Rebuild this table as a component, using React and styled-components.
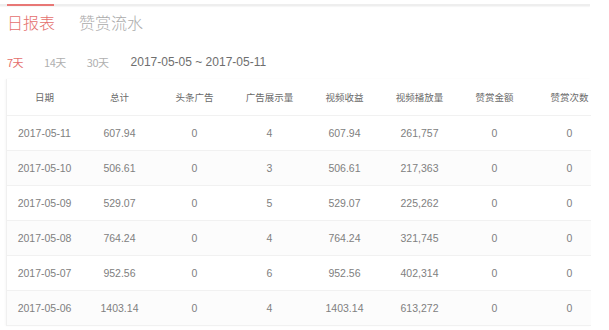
import React from "react";
import styled, { createGlobalStyle } from "styled-components";

const GlobalStyle = createGlobalStyle`
  html, body {
    margin: 0;
    padding: 0;
    background: #fff;
    width: 609px;
    height: 330px;
    overflow: hidden;
  }
  body {
    font-family: "Liberation Sans", "Noto Sans CJK SC", sans-serif;
  }
`;

const Page = styled.div`
  width: 609px;
  height: 330px;
  padding-top: 4px;
  box-sizing: border-box;
`;

const TopRule = styled.div`
  width: 590px;
  height: 2px;
  background: #eeeeee;
  box-shadow: 0 1px 1px rgba(0, 0, 0, 0.04);
  position: relative;
`;

const RuleMark = styled.div`
  position: absolute;
  left: 7px;
  top: 0;
  width: 47px;
  height: 2px;
  background: #e87775;
`;

const Tabs = styled.div`
  display: flex;
  gap: 24px;
  padding: 0 0 7px 7px;
  align-items: center;
  box-sizing: border-box;
  height: 39px;
`;

const Tab = styled.div`
  font-family: "Noto Sans CJK SC", sans-serif;
  font-size: 16px;
  font-weight: 300;
  color: ${(p) => (p.$active ? "#e46f6d" : "#ababab")};
`;

const Filters = styled.div`
  display: flex;
  align-items: center;
  padding: 8px 0 0 7px;
  height: 18px;
  font-size: 11px;
`;

const Range = styled.span`
  font-family: "Noto Sans CJK SC", sans-serif;
  color: ${(p) => (p.$active ? "#e46f6d" : "#b0b0b0")};
  margin-right: ${(p) => p.$gap}px;
  letter-spacing: -0.5px;
`;

const Dates = styled.span`
  font-family: "Liberation Sans", sans-serif;
  font-size: 12px;
  color: #6e6e6e;
  white-space: pre;
`;

const Table = styled.div`
  margin: 8px 0 0 6px;
  width: 584px;
  border-left: 1px solid #f0f0f0;
  box-shadow: -1px 0 2px rgba(0, 0, 0, 0.03);
`;

const Row = styled.div`
  display: grid;
  grid-template-columns: repeat(8, 75px);
  height: ${(p) => (p.$head ? 37 : 35)}px;
  align-items: center;
  border-bottom: 1px solid #f1f1f1;
  box-sizing: border-box;
  background: ${(p) => (p.$shade ? "#fcfcfc" : "#fff")};
`;

const Cell = styled.div`
  text-align: center;
  font-size: ${(p) => (p.$head ? "9.5px" : "10.5px")};
  font-family: ${(p) =>
    p.$head ? '"Noto Sans CJK SC", sans-serif' : '"Liberation Sans", sans-serif'};
  color: ${(p) => (p.$head ? "#6a6a6a" : "#808080")};
  white-space: nowrap;
`;

const headers = ["日期", "总计", "头条广告", "广告展示量", "视频收益", "视频播放量", "赞赏金额", "赞赏次数"];

const rows = [
  ["2017-05-11", "607.94", "0", "4", "607.94", "261,757", "0", "0"],
  ["2017-05-10", "506.61", "0", "3", "506.61", "217,363", "0", "0"],
  ["2017-05-09", "529.07", "0", "5", "529.07", "225,262", "0", "0"],
  ["2017-05-08", "764.24", "0", "4", "764.24", "321,745", "0", "0"],
  ["2017-05-07", "952.56", "0", "6", "952.56", "402,314", "0", "0"],
  ["2017-05-06", "1403.14", "0", "4", "1403.14", "613,272", "0", "0"],
];

export default function App() {
  return (
    <Page>
      <GlobalStyle />
      <TopRule>
        <RuleMark />
      </TopRule>
      <Tabs>
        <Tab $active>日报表</Tab>
        <Tab>赞赏流水</Tab>
      </Tabs>
      <Filters>
        <Range $active $gap={21}>7天</Range>
        <Range $gap={21}>14天</Range>
        <Range $gap={22}>30天</Range>
        <Dates>2017-05-05 ~ 2017-05-11</Dates>
      </Filters>
      <Table>
        <Row $head>
          {headers.map((h) => (
            <Cell $head key={h}>{h}</Cell>
          ))}
        </Row>
        {rows.map((r, i) => (
          <Row key={r[0]} $shade={i % 2 === 1}>
            {r.map((v, j) => (
              <Cell key={j}>{v}</Cell>
            ))}
          </Row>
        ))}
      </Table>
    </Page>
  );
}
